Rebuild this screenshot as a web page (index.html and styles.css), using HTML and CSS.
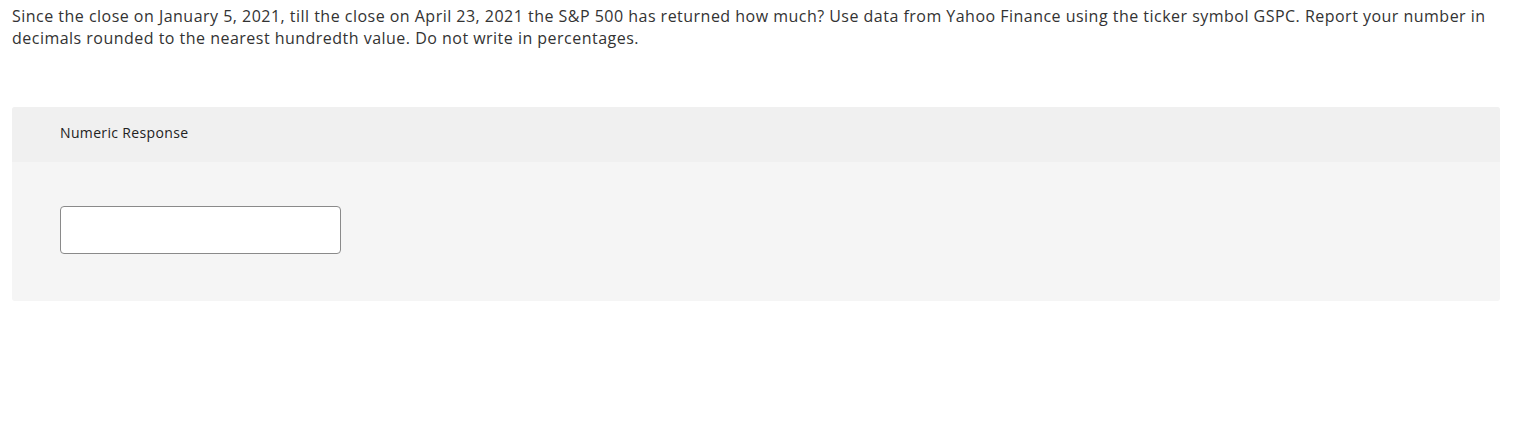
FILE: index.html
```html
<!DOCTYPE html>
<html>
<head>
<meta charset="utf-8">
<link rel="stylesheet" href="styles.css">
</head>
<body>
<div class="question">
<p class="prompt">Since the close on January 5, 2021, till the close on April 23, 2021 the S&amp;P 500 has returned how much? Use data from Yahoo Finance using the ticker symbol GSPC. Report your number in decimals rounded to the nearest hundredth value. Do not write in percentages.</p>
<div class="panel">
<div class="panel-head">Numeric Response</div>
<div class="panel-body">
<input class="answer" type="text">
</div>
</div>
</div>
</body>
</html>
```
FILE: styles.css
```css
html, body {
  margin: 0;
  padding: 0;
  background: #fff;
}
body {
  font-family: "Open Sans", "DejaVu Sans", sans-serif;
  color: #333;
}
.question {
  padding: 5px 16px 0 12px;
}
.prompt {
  margin: 0;
  font-size: 16px;
  line-height: 22px;
  letter-spacing: 0.48px;
}
.panel {
  margin-top: 58px;
  width: 1488px;
  border-radius: 3px;
  overflow: hidden;
  background: #f5f5f5;
}
.panel-head {
  background: #f0f0f0;
  height: 55px;
  box-sizing: border-box;
  padding: 17px 0 0 48px;
  font-size: 14px;
  line-height: 18px;
  letter-spacing: 0.35px;
  color: #222;
}
.panel-body {
  padding: 44px 0 47px 48px;
}
.answer {
  display: block;
  width: 281px;
  height: 48px;
  box-sizing: border-box;
  border: 1px solid #8a8a8a;
  border-radius: 4px;
  background: #fff;
  margin: 0;
}
```
